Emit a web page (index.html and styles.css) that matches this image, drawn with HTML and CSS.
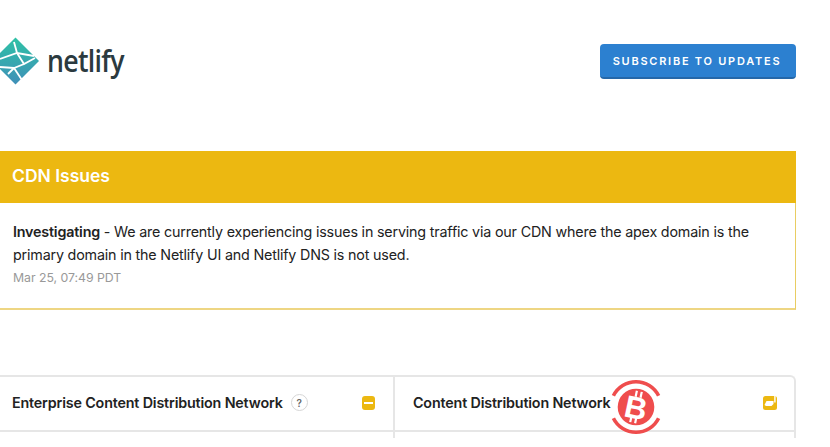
FILE: index.html
```html
<!DOCTYPE html>
<html lang="en">
<head>
<meta charset="utf-8">
<title>Netlify Status</title>
<link rel="stylesheet" href="styles.css">
</head>
<body>
<div class="page">
  <header class="masthead">
    <a class="brand">
      <svg class="brand-mark" width="40" height="50" viewBox="0 0 40 50">
        <defs>
          <linearGradient id="lg" x1="0.5" y1="0" x2="0.5" y2="1">
            <stop offset="0" stop-color="#2fc2a6"/>
            <stop offset="1" stop-color="#3f8fb8"/>
          </linearGradient>
        </defs>
        <polygon points="15.5,1.5 39,25 15.5,48.5 -8,25" fill="url(#lg)"/>
        <g fill="none" stroke="#fff" stroke-width="1.8">
          <path d="M0 23 L17 17 L34 20"/>
          <path d="M17 17 L14 6"/>
          <path d="M17 17 L24 28 L35 22"/>
          <path d="M0 31 L14 32 L24 28"/>
          <path d="M14 32 L22 44"/>
          <path d="M14 32 L8 38"/>
        </g>
      </svg>
      <span class="brand-name">netlify</span>
    </a>
    <a class="subscribe">SUBSCRIBE TO UPDATES</a>
  </header>

  <section class="incident">
    <h2 class="incident-title">CDN Issues</h2>
    <div class="incident-body">
      <p class="incident-text"><strong>Investigating</strong> - We are currently experiencing issues in serving traffic via our CDN where the apex domain is the primary domain in the Netlify UI and Netlify DNS is not used.</p>
      <p class="incident-time">Mar 25, 07:49 PDT</p>
    </div>
  </section>

  <section class="components">
    <div class="component">
      <span class="component-name">Enterprise Content Distribution Network</span>
      <span class="help">?</span>
      <span class="status status-minus"></span>
    </div>
    <div class="component">
      <span class="component-name">Content Distribution Network</span>
      <svg class="status-flag" width="14" height="14" viewBox="0 0 14 14">
        <rect width="14" height="14" rx="2.5" fill="#ecb811"/>
        <path d="M1.5 9 L3.5 5 H10.5 V8 L8.5 10 H3Z" fill="#fff"/>
        <rect x="11.2" y="0" width="1.4" height="6.5" fill="#fff"/>
      </svg>
    </div>
    <div class="component-next"></div>
    <div class="component-next"></div>
  </section>
</div>

<svg class="watermark" width="56" height="58" viewBox="0 0 56 58">
  <g fill="none" stroke="#ef4d4d" stroke-width="3.6">
    <path d="M5.4 17.8 A 25.2 25.2 0 0 1 50.6 17.8"/>
    <path d="M5.4 40.2 A 25.2 25.2 0 0 0 50.6 40.2"/>
  </g>
  <circle cx="28" cy="29" r="18.3" fill="#ef4d4d"/>
  <g transform="rotate(12 28 29)">
    <text class="watermark-b" x="28" y="40.5" text-anchor="middle">B</text>
    <path d="M25.5 13 V19 M30.5 13 V19 M25.5 39 V45 M30.5 39 V45" stroke="#fff" stroke-width="2.2"/>
  </g>
</svg>
</body>
</html>
```

FILE: styles.css
```css
* { box-sizing: border-box; }
html, body { margin: 0; padding: 0; background: #fff; }
body {
  width: 830px;
  height: 447px;
  overflow: hidden;
  position: relative;
  font-family: "Inter", "Liberation Sans", sans-serif;
  color: #262626;
}
.page {
  width: 796px;
  height: 438px;
  overflow: hidden;
}
.masthead {
  height: 151px;
  display: flex;
  justify-content: space-between;
  align-items: flex-start;
}
.brand {
  display: flex;
  align-items: center;
  gap: 7px;
  margin-top: 36px;
}
.brand-name {
  font-family: "Open Sans", sans-serif;
  font-weight: 600;
  font-size: 30px;
  line-height: 50px;
  letter-spacing: -0.8px;
  color: #2b3a3f;
  transform: scaleX(0.89);
  transform-origin: left center;
}
.subscribe {
  margin-top: 44px;
  width: 196px;
  height: 35px;
  padding-right: 2px;
  display: flex;
  align-items: center;
  justify-content: center;
  background: #2c80d0;
  border-bottom: 2px solid #2567a8;
  border-radius: 4px;
  color: #fff;
  font-size: 11px;
  font-weight: 600;
  letter-spacing: 1.75px;
}
.incident {
  height: 159px;
}
.incident-title {
  margin: 0;
  height: 52px;
  background: #ecb811;
  color: #fff;
  padding-left: 12px;
  font-size: 17.5px;
  font-weight: 600;
  line-height: 50px;
}
.incident-body {
  height: 107px;
  padding: 18px 12px 0 13px;
  border-right: 1px solid #e9cd62;
  border-bottom: 2px solid #eed683;
}
.incident-text {
  margin: 0;
  font-size: 14.3px;
  line-height: 22.5px;
  letter-spacing: -0.18px;
  color: #222;
}
.incident-time {
  margin: 3px 0 0;
  font-size: 12.3px;
  line-height: 17px;
  letter-spacing: -0.03px;
  color: #999;
}
.incident-text strong { font-weight: 600; }
.components {
  margin-top: 65px;
  display: grid;
  grid-template-columns: 393px 1fr;
  grid-auto-rows: 55px;
  border-top: 2px solid #e6e6e6;
  border-right: 2px solid #e6e6e6;
  border-top-right-radius: 6px;
}
.component {
  display: flex;
  align-items: center;
  padding-left: 12px;
  padding-bottom: 2px;
  border-bottom: 2px solid #e6e6e6;
  font-size: 14.3px;
  font-weight: 600;
  letter-spacing: -0.16px;
  color: #222;
}
.component:nth-child(2) {
  border-left: 2px solid #e6e6e6;
  padding-left: 18px;
  padding-right: 17px;
  justify-content: space-between;
}
.component-next:nth-child(4) { border-left: 2px solid #e6e6e6; }
.help {
  width: 17px;
  height: 17px;
  margin-left: 8px;
  border: 1px solid #d6d6d6;
  border-radius: 50%;
  display: flex;
  align-items: center;
  justify-content: center;
  font-size: 10px;
  font-weight: 600;
  color: #666;
}
.status {
  width: 13px;
  height: 14px;
  margin-left: auto;
  margin-right: 18px;
  border-radius: 3px;
  background: #ecb811;
  display: flex;
  align-items: center;
  justify-content: center;
}
.status-minus::before {
  content: "";
  width: 9px;
  height: 2px;
  background: #fff;
}
.watermark {
  position: absolute;
  left: 608px;
  top: 378px;
}
.watermark-b {
  font-family: "Liberation Sans", sans-serif;
  font-weight: 700;
  font-size: 31px;
  fill: #fff;
}
```
